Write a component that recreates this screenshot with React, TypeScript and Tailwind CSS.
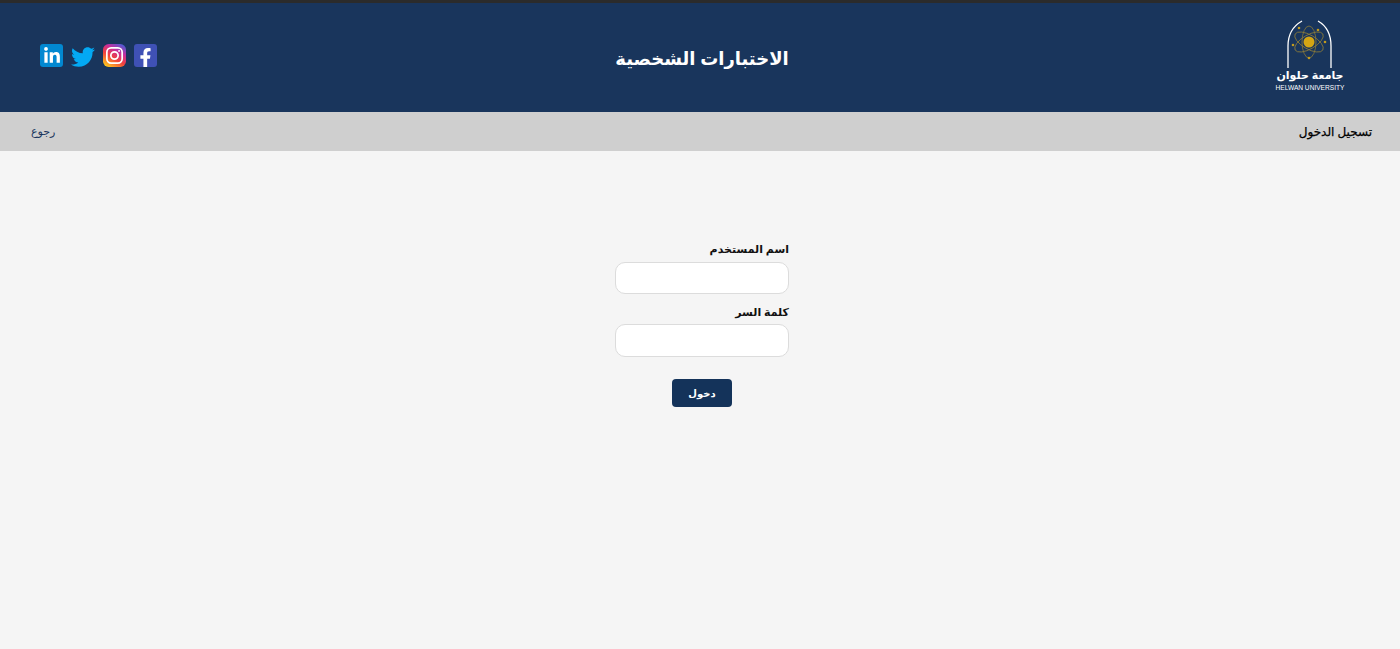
import { FaLinkedinIn, FaTwitter, FaFacebookF } from "react-icons/fa";

const font = { fontFamily: '"Noto Sans", "DejaVu Sans", sans-serif' };

function Logo() {
	return (
		<div className="flex flex-col items-center w-[70px] text-white -mt-[3px]">
			<svg viewBox="0 0 70 48" className="w-[70px] h-[48px]">
				<path d="M13 48V26C13 13 20 5 27 1M56 48V26C56 13 50 5 43 1" fill="none" stroke="#fff" strokeWidth="1.3" />
				<g fill="none" stroke="#8a7a3a" strokeWidth="0.8">
					<ellipse cx="34" cy="22" rx="16" ry="7" transform="rotate(30 34 22)" />
					<ellipse cx="34" cy="22" rx="16" ry="7" transform="rotate(-30 34 22)" />
					<ellipse cx="34" cy="22" rx="16" ry="7" transform="rotate(90 34 22)" />
				</g>
				<circle cx="34" cy="22" r="5.5" fill="#d4a514" />
				<g fill="#c19a1e">
					<circle cx="24" cy="8" r="1.3" />
					<circle cx="43" cy="10" r="1.3" />
					<circle cx="18" cy="25" r="1.3" />
					<circle cx="50" cy="22" r="1.3" />
					<circle cx="34" cy="38" r="1.3" />
				</g>
			</svg>
			<div dir="rtl" className="text-[11px] leading-[14px] font-bold whitespace-nowrap" style={font}>جامعة حلوان</div>
			<div className="text-[6.6px] leading-[9px] mt-[1px] whitespace-nowrap font-['Liberation_Sans',sans-serif]">HELWAN UNIVERSITY</div>
		</div>
	);
}

function Instagram() {
	return (
		<svg viewBox="0 0 24 24" className="w-[23px] h-[23px]">
			<defs>
				<linearGradient id="ig" x1="0.2" y1="1" x2="0.8" y2="0">
					<stop offset="0" stopColor="#fdc81e" />
					<stop offset="0.4" stopColor="#f0403c" />
					<stop offset="0.7" stopColor="#c82d9c" />
					<stop offset="1" stopColor="#4f5bd5" />
				</linearGradient>
			</defs>
			<rect width="24" height="24" rx="6" fill="url(#ig)" />
			<rect x="4" y="4" width="16" height="16" rx="4.5" fill="none" stroke="#fff" strokeWidth="1.8" />
			<circle cx="12" cy="12" r="3.8" fill="none" stroke="#fff" strokeWidth="1.8" />
			<circle cx="16.8" cy="7.2" r="1" fill="#fff" />
		</svg>
	);
}

export default function App() {
	return (
		<div dir="rtl" className="min-h-[649px] bg-[#f5f5f5]" style={font}>
			<div className="h-[3px] bg-[#2b2b2b]" />
			<header className="h-[109px] bg-[#19355c] flex items-center justify-between pr-[55px] pl-[40px] relative">
				<Logo />
				<h1 className="absolute left-[4px] right-0 top-[40px] text-center text-[18px] leading-[30px] font-bold text-white">الاختبارات الشخصية</h1>
				<div dir="ltr" className="flex items-center -mt-[4px]">
					<div className="w-[23px] h-[23px] rounded-[3px] bg-[#0288d1] flex items-center justify-center">
						<FaLinkedinIn className="w-[18px] h-[18px] text-white" />
					</div>
					<FaTwitter className="w-[24px] h-[24px] ml-[8px] mt-[3px] text-[#03a9f4]" />
					<div className="ml-[8px]"><Instagram /></div>
					<div className="ml-[8px] w-[23px] h-[23px] rounded-[3px] bg-[#3f51b5] flex items-end justify-center">
						<FaFacebookF className="w-[19px] h-[19px] text-white" />
					</div>
				</div>
			</header>
			<nav className="h-[39px] bg-[#cfcfcf] flex items-center justify-between pr-[28px] pl-[31px]">
				<span className="text-[12px] text-black [-webkit-text-stroke:0.25px_#000]">تسجيل الدخول</span>
				<a className="text-[11px] text-[#19355c]">رجوع</a>
			</nav>
			<div className="flex justify-center pl-[4px]">
				<main className="w-[174px] pt-[89px] flex flex-col">
					<label className="text-[11px] leading-[18px] font-bold text-[#111]">اسم المستخدم</label>
					<input className="h-[32px] mt-[4px] rounded-[10px] bg-white border border-[#dcdcdc]" />
					<label className="mt-[7px] text-[11px] leading-[22px] font-bold text-[#111]">كلمة السر</label>
					<input className="h-[33px] mt-[1px] rounded-[10px] bg-white border border-[#dcdcdc]" />
					<button className="self-center mt-[22px] w-[60px] h-[28px] rounded-[4px] bg-[#14335a] text-white text-[10px] font-bold">دخول</button>
				</main>
			</div>
		</div>
	);
}
